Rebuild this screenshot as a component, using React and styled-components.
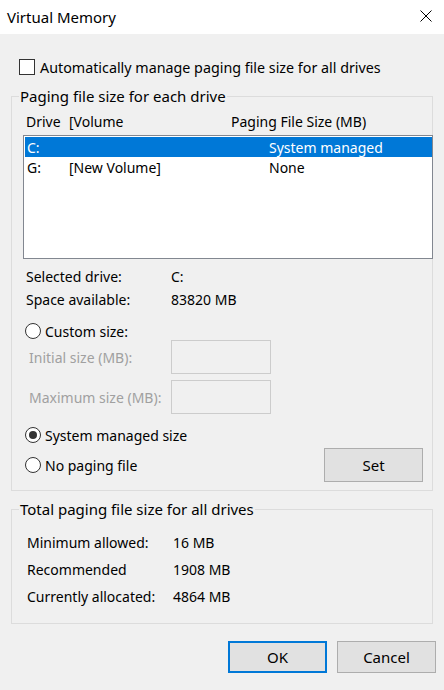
import React from "react"
import styled, { createGlobalStyle } from "styled-components"

const GlobalStyle = createGlobalStyle`
  html, body {
    margin: 0;
    padding: 0;
    background: #f0f0f0;
  }
  body {
    font-family: "Noto Sans", "Segoe UI", sans-serif;
    font-size: 14px;
    color: #000;
  }
`

const drives = [
  { letter: "C:", volume: "", size: "System managed", selected: true },
  { letter: "G:", volume: "[New Volume]", size: "None" },
]

const totals = [
  ["Minimum allowed:", "16 MB"],
  ["Recommended", "1908 MB"],
  ["Currently allocated:", "4864 MB"],
]

const App = () => {
  return (
    <Window>
      <GlobalStyle />
      <TitleBar>
        <Title>Virtual Memory</Title>
        <CloseIcon width="12" height="12" viewBox="0 0 12 12">
          <path d="M0.5 0.5 L11.5 11.5 M11.5 0.5 L0.5 11.5" stroke="#000" strokeWidth="1" />
        </CloseIcon>
      </TitleBar>

      <CheckRow>
        <CheckBox />
        <span>Automatically manage paging file size for all drives</span>
      </CheckRow>

      <Group>
        <Legend>Paging file size for each drive</Legend>
        <ListHeader>
          <span>Drive</span>
          <span>[Volume</span>
          <span>Paging File Size (MB)</span>
        </ListHeader>
        <ListBox>
          {drives.map((d) => (
            <DriveRow key={d.letter} $selected={d.selected}>
              <span>{d.letter}</span>
              <span>{d.volume}</span>
              <span>{d.size}</span>
            </DriveRow>
          ))}
        </ListBox>

        <InfoRow $top={6}>
          <span>Selected drive:</span>
          <span>C:</span>
        </InfoRow>
        <InfoRow>
          <span>Space available:</span>
          <span>83820 MB</span>
        </InfoRow>

        <RadioRow $top={11}>
          <Radio />
          <span>Custom size:</span>
        </RadioRow>
        <SizeRow>
          <DisabledLabel>Initial size (MB):</DisabledLabel>
          <SizeInput disabled />
        </SizeRow>
        <SizeRow $top={6}>
          <DisabledLabel>Maximum size (MB):</DisabledLabel>
          <SizeInput disabled />
        </SizeRow>

        <BottomRow>
          <RadioColumn>
            <RadioRow>
              <Radio $checked />
              <span>System managed size</span>
            </RadioRow>
            <RadioRow>
              <Radio />
              <span>No paging file</span>
            </RadioRow>
          </RadioColumn>
          <Button>Set</Button>
        </BottomRow>
      </Group>

      <Group $top={8} $bottom={13}>
        <Legend>Total paging file size for all drives</Legend>
        <TotalsList>
          {totals.map(([label, value]) => (
            <TotalRow key={label}>
              <span>{label}</span>
              <span>{value}</span>
            </TotalRow>
          ))}
        </TotalsList>
      </Group>

      <ButtonRow>
        <Button $default $height={32}>OK</Button>
        <Button $height={32}>Cancel</Button>
      </ButtonRow>
    </Window>
  )
}

export default App

const Window = styled.div`
  width: 444px;
  height: 690px;
  display: flex;
  flex-direction: column;
  background: #f0f0f0;
  overflow: hidden;
`

const TitleBar = styled.div`
  height: 34px;
  flex-shrink: 0;
  background: #fff;
  display: flex;
  align-items: center;
  justify-content: space-between;
  padding: 0 12px 0 7px;
`

const Title = styled.span`
  font-size: 15px;
  padding-bottom: 1px;
`

const CloseIcon = styled.svg`
  display: block;
  margin-bottom: 2px;
`

const CheckRow = styled.label`
  display: flex;
  align-items: center;
  gap: 5px;
  height: 20px;
  margin: 23px 0 0 19px;
  font-size: 14.3px;
`

const CheckBox = styled.span`
  width: 16px;
  height: 16px;
  box-sizing: border-box;
  border: 1px solid #333;
  background: #fff;
  flex-shrink: 0;
`

const Group = styled.fieldset`
  margin: ${(p) => p.$top ?? 9}px 11px 0;
  padding: 0 0 ${(p) => p.$bottom ?? 8}px 11px;
  border: 1px solid #dcdcdc;
  min-width: 0;
`

const Legend = styled.legend`
  margin-left: -4px;
  padding: 0 1px;
  line-height: 20px;
  font-size: 15px;
`

const columns = `
  display: grid;
  align-items: center;
  height: 20px;
  white-space: nowrap;
`

const ListHeader = styled.div`
  ${columns}
  grid-template-columns: 43px 162px 1fr;
  margin-top: 5px;
  padding-left: 3px;
`

const ListBox = styled.div`
  margin: 4px -1px 0 0;
  height: 124px;
  box-sizing: border-box;
  border: 1px solid #828790;
  background: #fff;
  padding: 1px 0 1px 1px;
  position: relative;
`

const DriveRow = styled.div`
  ${columns}
  grid-template-columns: 42px 200px 1fr;
  padding-left: 2px;
  background: ${(p) => (p.$selected ? "#0078d7" : "transparent")};
  color: ${(p) => (p.$selected ? "#fff" : "#000")};
`

const InfoRow = styled.div`
  display: grid;
  grid-template-columns: 145px 1fr;
  align-items: center;
  height: 23px;
  margin-top: ${(p) => p.$top ?? 0}px;
  padding-left: 3px;
`

const RadioRow = styled.label`
  display: flex;
  align-items: center;
  gap: 4px;
  height: 18px;
  margin-top: ${(p) => p.$top ?? 0}px;
  padding-left: 2px;
`

const Radio = styled.span`
  width: 16px;
  height: 16px;
  box-sizing: border-box;
  border-radius: 50%;
  border: 1px solid #333;
  background: #fff;
  flex-shrink: 0;
  position: relative;
  &::after {
    content: "";
    display: ${(p) => (p.$checked ? "block" : "none")};
    position: absolute;
    left: 3px;
    top: 3px;
    width: 8px;
    height: 8px;
    border-radius: 50%;
    background: #333;
  }
`

const SizeRow = styled.div`
  display: grid;
  grid-template-columns: 142px 100px;
  align-items: center;
  margin-top: ${(p) => p.$top ?? 0}px;
  padding-left: 6px;
`

const DisabledLabel = styled.span`
  color: #a0a0a0;
`

const SizeInput = styled.input`
  width: 100px;
  height: 34px;
  box-sizing: border-box;
  border: 1px solid #cccccc;
  background: #f0f0f0;
  margin: 0;
`

const BottomRow = styled.div`
  display: flex;
  justify-content: space-between;
  align-items: flex-end;
  margin-top: 12px;
  padding-right: 9px;
`

const RadioColumn = styled.div`
  display: flex;
  flex-direction: column;
  gap: 12px;
  padding-bottom: 8px;
`

const Button = styled.button`
  width: 99px;
  height: ${(p) => p.$height ?? 34}px;
  box-sizing: border-box;
  background: #e1e1e1;
  border: ${(p) => (p.$default ? "2px solid #0078d7" : "1px solid #adadad")};
  font-family: inherit;
  font-size: 15px;
  color: #000;
  padding: 0;
  margin: 0;
`

const TotalsList = styled.div`
  padding: 10px 0 0 4px;
`

const TotalRow = styled.div`
  display: grid;
  grid-template-columns: 146px 1fr;
  align-items: center;
  height: 27px;
`

const ButtonRow = styled.div`
  display: flex;
  justify-content: flex-end;
  gap: 10px;
  margin-top: 17px;
  padding-right: 8px;
`
